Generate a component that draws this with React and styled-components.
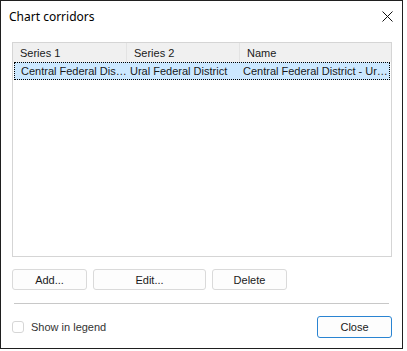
import React from 'react';
import styled, { createGlobalStyle } from 'styled-components';

const GlobalStyle = createGlobalStyle`
  html, body {
    margin: 0;
    padding: 0;
    background: #ffffff;
  }
  * {
    box-sizing: border-box;
  }
`;

const Dialog = styled.div`
  width: 403px;
  height: 349px;
  border: 1px solid #1f1f1f;
  background: #ffffff;
  display: flex;
  flex-direction: column;
  font-family: "Liberation Sans", Arial, sans-serif;
  font-size: 11px;
  color: #000000;
`;

const TitleBar = styled.div`
  height: 30px;
  display: flex;
  align-items: center;
  justify-content: space-between;
  padding: 0 9px 0 8px;
`;

const Title = styled.span`
  font-family: "Noto Sans", sans-serif;
  font-size: 12px;
  color: #000;
`;

const CloseIcon = styled.svg`
  width: 11px;
  height: 11px;
  margin-top: 1px;
`;

const Body = styled.div`
  flex: 1;
  display: flex;
  flex-direction: column;
  padding: 11px 10px 0 11px;
`;

const List = styled.div`
  width: 380px;
  height: 215px;
  border: 1px solid #d5d5d5;
  display: flex;
  flex-direction: column;
`;

const Grid = styled.div`
  display: grid;
  grid-template-columns: 114px 113px 1fr;
  height: ${p => p.$h}px;
  align-items: center;
  background: ${p => p.$bg || 'transparent'};
  border: ${p => (p.$focus ? '1px dotted #000' : 'none')};
  margin: ${p => (p.$focus ? '0 1px 0 1px' : '0')};
`;

const HeadCell = styled.div`
  height: 100%;
  display: flex;
  align-items: center;
  padding-left: 7px;
  color: #1a1a1a;
  border-right: ${p => (p.$last ? 'none' : '1px solid #e3e3e3')};
`;

const Cell = styled.div`
  padding-left: ${p => p.$pl}px;
  white-space: nowrap;
  overflow: hidden;
  color: #1a1a1a;
`;

const ButtonRow = styled.div`
  display: flex;
  gap: 6px;
  margin-top: 12px;
`;

const Button = styled.button`
  width: ${p => p.$w}px;
  height: ${p => p.$h || 21}px;
  border: 1px solid ${p => (p.$primary ? '#2a84d2' : '#dadada')};
  border-radius: 3px;
  background: #fdfdfd;
  font-family: inherit;
  font-size: 11px;
  color: #1a1a1a;
  padding: 0;
  margin-left: ${p => p.$ml || 0}px;
`;

const Separator = styled.div`
  height: 1px;
  background: #c8c8c8;
  margin: 13px 3px 0 2px;
`;

const Footer = styled.div`
  display: flex;
  align-items: center;
  justify-content: space-between;
  margin-top: 12px;
`;

const CheckLabel = styled.label`
  display: flex;
  align-items: center;
  gap: 7px;
  color: #333;
`;

const Box = styled.span`
  width: 12px;
  height: 12px;
  border: 1px solid #d6d6d6;
  border-radius: 3px;
  background: #fff;
`;

const rows = [
  ['Central Federal Dis…', 'Ural Federal District', 'Central Federal District - Ur…'],
];

export default function App() {
  return (
    <>
      <GlobalStyle />
      <Dialog>
        <TitleBar>
          <Title>Chart corridors</Title>
          <CloseIcon viewBox="0 0 11 11">
            <path d="M0.5 0.5 L10.5 10.5 M10.5 0.5 L0.5 10.5" stroke="#111" strokeWidth="1" fill="none" />
          </CloseIcon>
        </TitleBar>
        <Body>
          <List>
            <Grid $h={19} $bg="#f0f0f0">
              <HeadCell>Series 1</HeadCell>
              <HeadCell>Series 2</HeadCell>
              <HeadCell $last>Name</HeadCell>
            </Grid>
            {rows.map((r, i) => (
              <Grid key={i} $h={18} $bg="#cce8ff" $focus>
                <Cell $pl={6}>{r[0]}</Cell>
                <Cell $pl={1}>{r[1]}</Cell>
                <Cell $pl={1}>{r[2]}</Cell>
              </Grid>
            ))}
          </List>
          <ButtonRow>
            <Button $w={75}>Add...</Button>
            <Button $w={113}>Edit...</Button>
            <Button $w={75}>Delete</Button>
          </ButtonRow>
          <Separator />
          <Footer>
            <CheckLabel>
              <Box />
              Show in legend
            </CheckLabel>
            <Button $w={75} $h={22} $primary>Close</Button>
          </Footer>
        </Body>
      </Dialog>
    </>
  );
}
